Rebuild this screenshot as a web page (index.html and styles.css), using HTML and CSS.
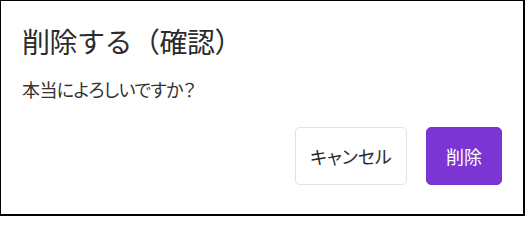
FILE: index.html
```html
<!DOCTYPE html>
<html lang="ja">
<head>
<meta charset="utf-8">
<title>削除する（確認）</title>
<link rel="stylesheet" href="styles.css">
</head>
<body>
<div class="dialog">
  <h1 class="dialog-title">削除する（確認）</h1>
  <p class="dialog-message">本当によろしいですか？</p>
  <div class="dialog-actions">
    <button class="btn btn-cancel" type="button">キャンセル</button>
    <button class="btn btn-delete" type="button">削除</button>
  </div>
</div>
</body>
</html>
```

FILE: styles.css
```css
html, body {
  margin: 0;
  padding: 0;
  background: #ffffff;
}

body {
  font-family: "Noto Sans CJK JP", "Noto Sans", sans-serif;
  color: #333333;
}

.dialog {
  box-sizing: border-box;
  width: 525px;
  height: 216px;
  border: 1px solid #000000;
  border-right-width: 2px;
  border-bottom-width: 2px;
  padding: 20px 21px 0 21px;
  display: flex;
  flex-direction: column;
}

.dialog-title {
  margin: 0;
  font-size: 28px;
  font-weight: 400;
  line-height: 40px;
  letter-spacing: -0.5px;
  color: #2b2b2b;
}

.dialog-message {
  margin: 16px 0 0 0;
  font-size: 18px;
  line-height: 24px;
  letter-spacing: -0.6px;
  font-feature-settings: "palt";
}

.dialog-actions {
  display: flex;
  justify-content: flex-end;
  gap: 19px;
  margin-top: 26px;
}

.btn {
  box-sizing: border-box;
  height: 58px;
  font-family: inherit;
  font-size: 18px;
  line-height: 24px;
  border-radius: 5px;
  padding: 0;
  cursor: pointer;
  font-feature-settings: "palt";
}

.btn-cancel {
  width: 112px;
  background: #ffffff;
  border: 1px solid #e2e2e2;
  color: #2b2b2b;
}

.btn-delete {
  width: 76px;
  background: #7b35d2;
  border: 1px solid #7b35d2;
  color: #ffffff;
}
```
